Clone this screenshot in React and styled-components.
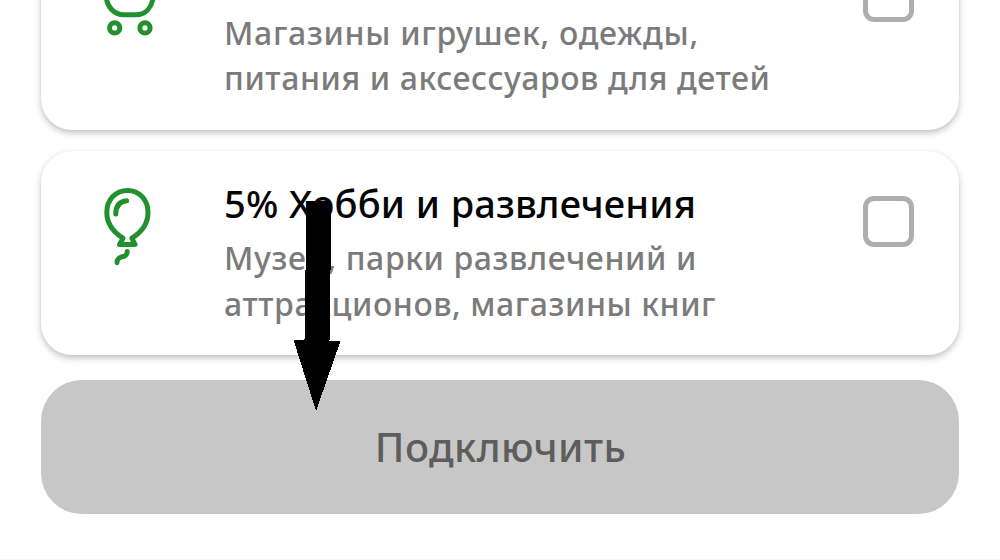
import styled, { createGlobalStyle } from "styled-components";

const GlobalStyle = createGlobalStyle`
    * {
        box-sizing: border-box;
    }
    body {
        margin: 0;
        background: #fefefe;
        font-family: "Noto Sans", sans-serif;
    }
`

const Screen = styled.main`
    position: relative;
    width: 1000px;
    height: 560px;
    padding: 0 41px;
    overflow: hidden;
    display: flex;
    flex-direction: column;
    border-bottom: 1px solid #f5f5f5;
`

/* the list is scrolled, so its first card is cut by the top edge */
const CardList = styled.div`
    display: flex;
    flex-direction: column;
    gap: 21px;
    margin-top: -75px;
`

const Card = styled.section`
    display: flex;
    align-items: flex-start;
    height: 204.5px;
    padding: 33.5px 45.5px 0 59px;
    border-radius: 31px;
    background: #fff;
    box-shadow: 0 3px 6px rgba(0,0,0,0.24), 0 0 2px rgba(0,0,0,0.04);
`

const Icon = styled.svg`
    width: 60px;
    height: 84px;
    margin-right: 65px;
    flex-shrink: 0;
    fill: none;
    stroke: #23902f;
    stroke-width: 5;
    stroke-linecap: round;
    stroke-linejoin: round;
`

const CardBody = styled.div`
    flex: 1;
    margin-left: -1px;
    white-space: nowrap;
`

const Title = styled.h2`
    height: 51.3px;
    margin: 0;
    font-size: 38px;
    line-height: 39px;
    font-weight: 500;
    letter-spacing: 0.15px;
    word-spacing: 0.5px;
    color: #050505;
`

const Line = styled.div`
    font-size: 32px;
    line-height: 45.4px;
    font-weight: 500;
    letter-spacing: ${({$spacing}) => $spacing}px;
    color: #7b7b7b;
`

const Checkbox = styled.button`
    width: 51px;
    height: 51px;
    margin-top: 12px;
    padding: 0;
    flex-shrink: 0;
    border: 5px solid #aeaeae;
    border-radius: 11px;
    background: transparent;
`

const ConnectButton = styled.button`
    height: 134px;
    margin-top: 25px;
    padding: 0 0 0 1px;
    border: none;
    border-radius: 41px;
    background: #c7c7c7;
    color: #5d5d5d;
    font-family: inherit;
    font-size: 40px;
    font-weight: 500;
    line-height: 54px;
    letter-spacing: 0.4px;
`

const Arrow = styled.svg`
    position: absolute;
    left: 293px;
    top: 200px;
    width: 48px;
    height: 212px;
    pointer-events: none;
`

const StrollerIcon = () => (
    <Icon viewBox="100 -42 60 84">
        <path d="M106 -5C107 6 114 13.8 124 13.8H136C146 13.8 152 6 153.5 -5" />
        <circle cx="114.7" cy="26.9" r="5.1" />
        <circle cx="145" cy="26.9" r="5.1" />
    </Icon>
)

const BalloonIcon = () => (
    <Icon viewBox="100 184 60 84">
        <path d="M123 238.2C114 232.5 106.8 224 106.8 212.5C106.8 199.5 115.8 190.4 127.4 190.4C139 190.4 148 199.5 148 212.5C148 224 141 232.5 131.8 238.2L135 244.4H119.5Z" />
        <path d="M115.8 214C115.8 206 119.5 201.5 126.7 200.8" />
        <path d="M127.2 251.5C127.2 260 117.2 253.5 117 262.7" />
    </Icon>
)

const cards = [
    {
        id: "kids",
        icon: <StrollerIcon />,
        lines: [
            { text: "Магазины игрушек, одежды,", spacing: 0.71 },
            { text: "питания и аксессуаров для детей", spacing: 0.59 }
        ]
    },
    {
        id: "hobby",
        icon: <BalloonIcon />,
        title: "5% Хобби и развлечения",
        lines: [
            { text: "Музеи, парки развлечений и", spacing: 0.6 },
            { text: "аттракционов, магазины книг", spacing: 0.57 }
        ]
    }
]

export default function App() {
    return (
        <Screen>
            <GlobalStyle />
            <CardList>
                {cards.map(({id, icon, title, lines}) => (
                    <Card key={id}>
                        {icon}
                        <CardBody>
                            <Title>{title}</Title>
                            {lines.map(({text, spacing}) => (
                                <Line key={text} $spacing={spacing}>{text}</Line>
                            ))}
                        </CardBody>
                        <Checkbox />
                    </Card>
                ))}
            </CardList>
            <ConnectButton>Подключить</ConnectButton>
            <Arrow viewBox="293 200 48 212" shapeRendering="crispEdges">
                <polygon points="306.5,201 331.5,201 329.5,340.5 340.5,341 316,411 293.5,340 304.5,340" />
            </Arrow>
        </Screen>
    )
}
